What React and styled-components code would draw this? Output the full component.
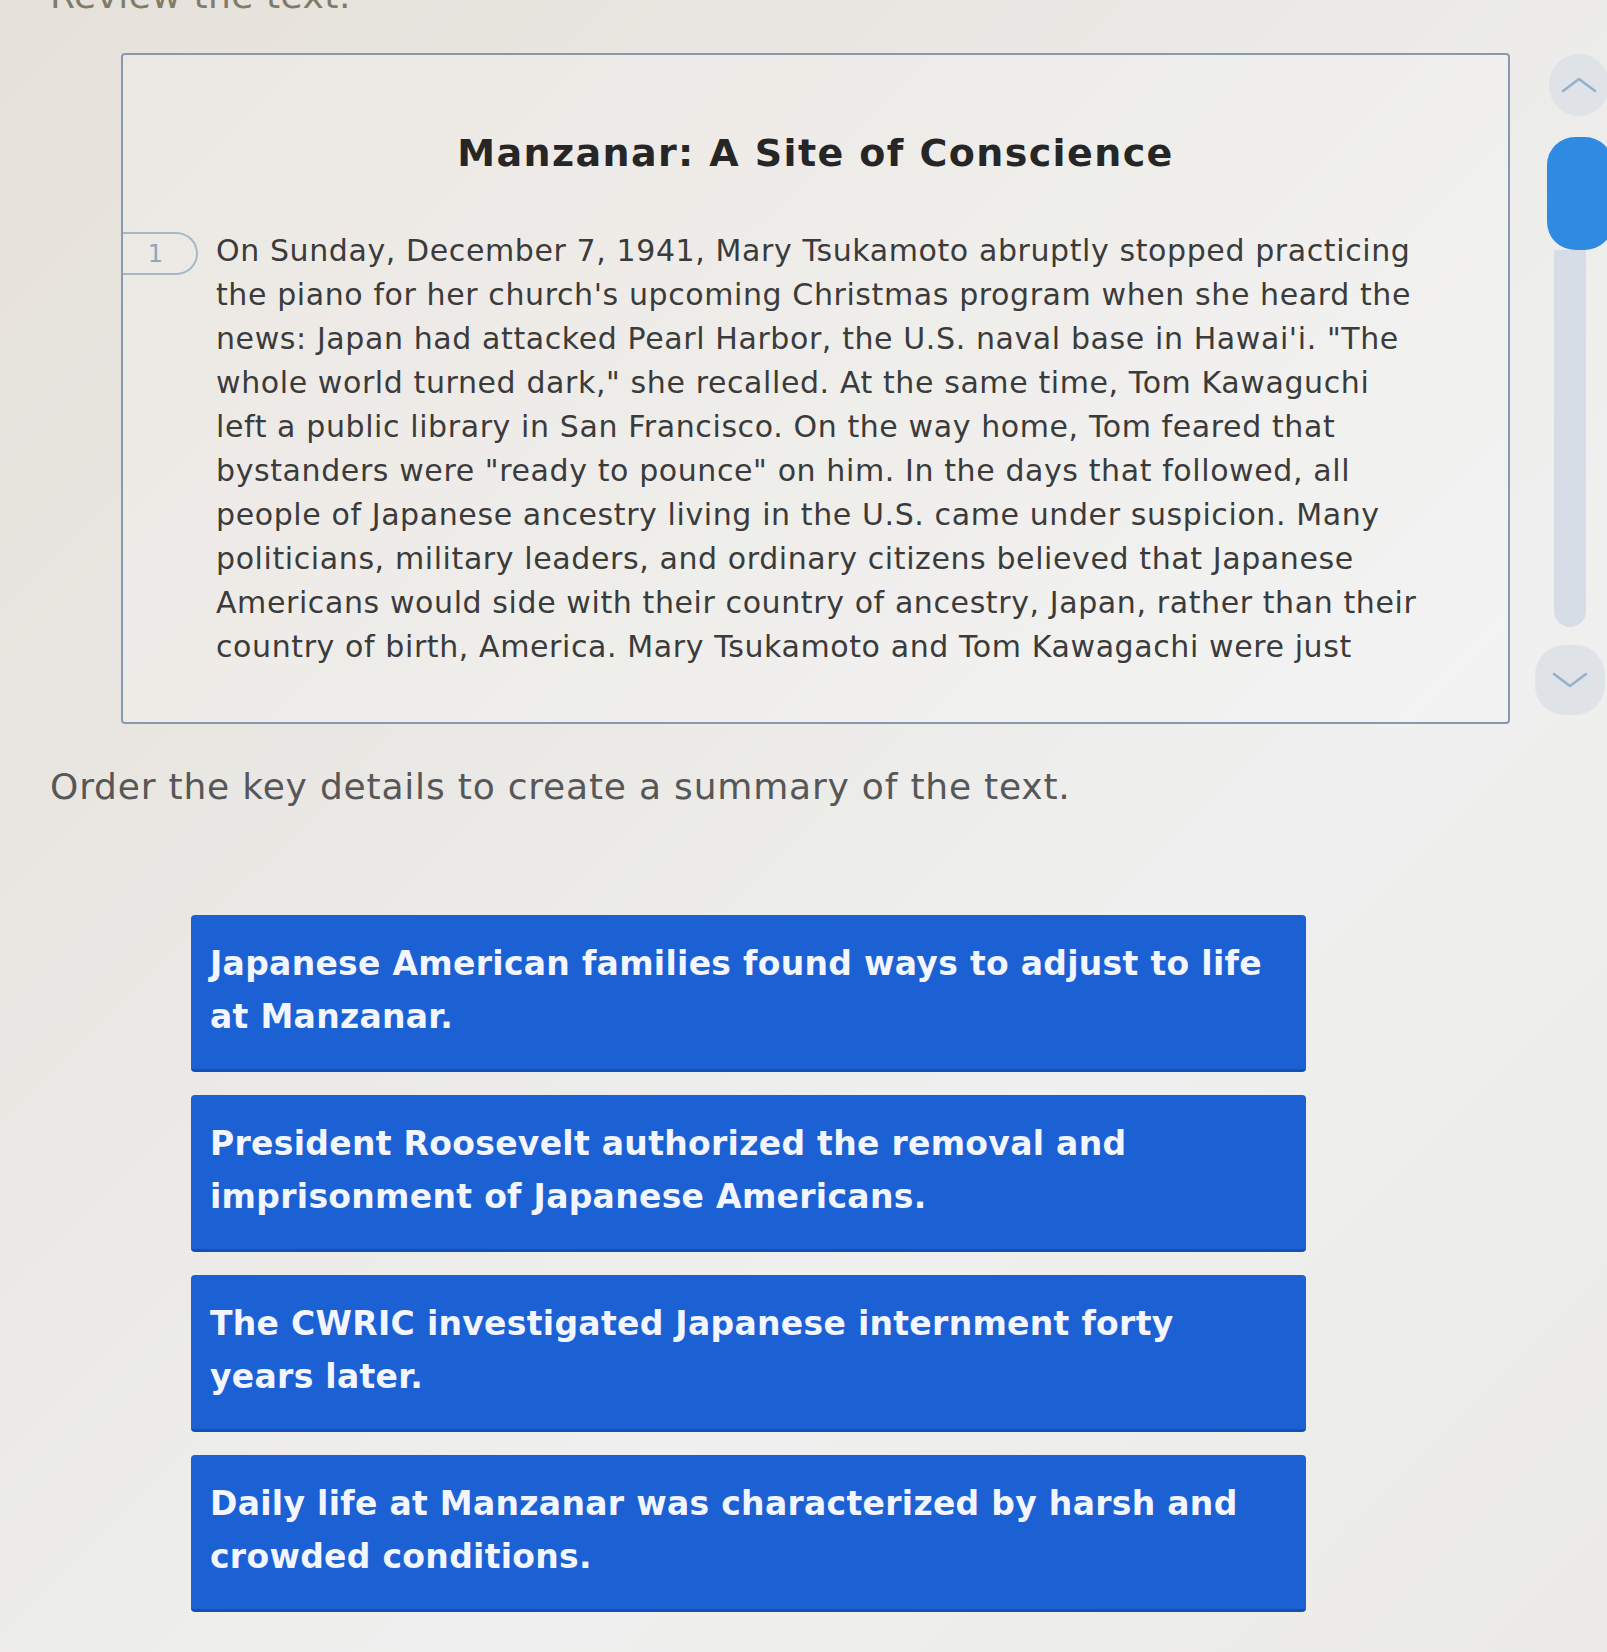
import React from 'react';
import styled, { createGlobalStyle } from 'styled-components';

const GlobalStyle = createGlobalStyle`
  html, body {
    margin: 0;
    padding: 0;
  }

  body {
    min-height: 1652px;
    overflow: hidden;
    font-family: 'DejaVu Sans', Verdana, sans-serif;
    background: linear-gradient(135deg, #e6e1da 0%, #eae8e4 35%, #eff0ef 65%, #ebeae6 100%);
  }
`;

const Page = styled.div`
  display: grid;
  grid-template-columns: 1547px 60px;
  width: 1607px;
  overflow: hidden;
`;

const Main = styled.main`
  display: flex;
  flex-direction: column;
  align-items: flex-start;
  padding-left: 50px;
`;

const Intro = styled.h2`
  margin: -22px 0 0;
  font-size: 36px;
  line-height: 36px;
  font-weight: normal;
  letter-spacing: 0.5px;
  color: #7f7c6a;
`;

const PassageBox = styled.section`
  box-sizing: border-box;
  margin: 39px 0 0 71px;
  width: 1389px;
  height: 671px;
  padding-bottom: 54px;
  border: 2px solid #8898ae;
  border-radius: 4px;
  background: rgba(255, 255, 255, 0.22);
`;

const Scroller = styled.div`
  height: 100%;
  overflow: hidden;
`;

const Title = styled.h1`
  margin: 76px 0 0;
  text-align: center;
  font-size: 38px;
  line-height: 44px;
  letter-spacing: 1.4px;
  font-weight: bold;
  color: #262626;
`;

const Paragraph = styled.div`
  display: flex;
  align-items: flex-start;
  margin-top: 54px;
`;

const ParaNumber = styled.span`
  box-sizing: border-box;
  flex: none;
  display: flex;
  align-items: center;
  justify-content: center;
  width: 75px;
  height: 43px;
  margin-top: 3px;
  padding-right: 8px;
  border: 2px solid #a5b8ca;
  border-left: none;
  border-radius: 0 22px 22px 0;
  font-size: 24px;
  color: #8ea6bd;
`;

const ParaText = styled.p`
  margin: 0 0 0 18px;
  font-size: 30px;
  line-height: 44px;
  letter-spacing: 0.6px;
  color: #3b3b3b;
`;

const Line = styled.span`
  display: block;
  white-space: nowrap;
`;

const Prompt = styled.p`
  margin: 43px 0 0;
  font-size: 36px;
  line-height: 40px;
  letter-spacing: 0.8px;
  color: #575757;
`;

const CardList = styled.ol`
  display: flex;
  flex-direction: column;
  gap: 23px;
  margin: 108px 0 0 141px;
  padding: 0;
  list-style: none;
`;

const Card = styled.li`
  box-sizing: border-box;
  width: 1115px;
  height: 157px;
  padding: 22px 19px;
  border-radius: 4px;
  border-bottom: 3px solid #1550b3;
  background: #1c61d4;
  color: #f3f5ff;
  font-size: 33px;
  line-height: 53px;
  letter-spacing: 0.3px;
  font-weight: bold;
  cursor: grab;
`;

const Scrollbar = styled.aside`
  display: flex;
  flex-direction: column;
  align-items: flex-start;
  padding-top: 54px;
`;

const ArrowButton = styled.button`
  display: flex;
  align-items: center;
  justify-content: center;
  width: ${({ $wide }) => ($wide ? '70px' : '60px')};
  height: ${({ $wide }) => ($wide ? '70px' : '62px')};
  margin: ${({ $wide }) => ($wide ? '18px 0 0 -12px' : '0 0 0 2px')};
  padding: 0;
  border: none;
  border-radius: 30px;
  background: #dfe3e8;
  cursor: pointer;
`;

const Thumb = styled.div`
  width: 66px;
  height: 113px;
  margin-top: 21px;
  border-radius: 28px;
  background: #2f8be2;
`;

const Track = styled.div`
  width: 32px;
  height: 377px;
  margin-left: 7px;
  border-radius: 0 0 16px 16px;
  background: #d6dde6;
`;

const Chevron = ({ down }) => (
  <svg width='36' height='18' viewBox='0 0 36 18'>
    <polyline
      points={down ? '2,3 18,15 34,3' : '2,15 18,3 34,15'}
      fill='none'
      stroke='#94b0cd'
      strokeWidth='2.5'
      strokeLinecap='round'
      strokeLinejoin='round'
    />
  </svg>
);

const passage = [
  'On Sunday, December 7, 1941, Mary Tsukamoto abruptly stopped practicing',
  "the piano for her church's upcoming Christmas program when she heard the",
  'news: Japan had attacked Pearl Harbor, the U.S. naval base in Hawai\'i. "The',
  'whole world turned dark," she recalled. At the same time, Tom Kawaguchi',
  'left a public library in San Francisco. On the way home, Tom feared that',
  'bystanders were "ready to pounce" on him. In the days that followed, all',
  'people of Japanese ancestry living in the U.S. came under suspicion. Many',
  'politicians, military leaders, and ordinary citizens believed that Japanese',
  'Americans would side with their country of ancestry, Japan, rather than their',
  'country of birth, America. Mary Tsukamoto and Tom Kawagachi were just',
];

const details = [
  ['Japanese American families found ways to adjust to life', 'at Manzanar.'],
  ['President Roosevelt authorized the removal and', 'imprisonment of Japanese Americans.'],
  ['The CWRIC investigated Japanese internment forty', 'years later.'],
  ['Daily life at Manzanar was characterized by harsh and', 'crowded conditions.'],
];

const App = () => (
  <>
    <GlobalStyle />
    <Page>
      <Main>
        <Intro>Review the text.</Intro>
        <PassageBox>
          <Scroller>
            <Title>Manzanar: A Site of Conscience</Title>
            <Paragraph>
              <ParaNumber>1</ParaNumber>
              <ParaText>
                {passage.map((line) => (
                  <Line key={line}>{line}</Line>
                ))}
              </ParaText>
            </Paragraph>
          </Scroller>
        </PassageBox>
        <Prompt>Order the key details to create a summary of the text.</Prompt>
        <CardList>
          {details.map((lines) => (
            <Card key={lines[0]}>
              {lines.map((line) => (
                <Line key={line}>{line}</Line>
              ))}
            </Card>
          ))}
        </CardList>
      </Main>
      <Scrollbar>
        <ArrowButton aria-label='Scroll up'>
          <Chevron />
        </ArrowButton>
        <Thumb />
        <Track />
        <ArrowButton $wide aria-label='Scroll down'>
          <Chevron down />
        </ArrowButton>
      </Scrollbar>
    </Page>
  </>
);

export default App;
